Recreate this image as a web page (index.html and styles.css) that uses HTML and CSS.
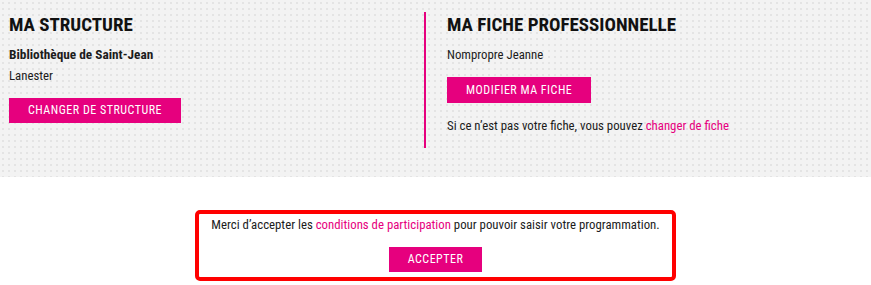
FILE: index.html
```html
<!DOCTYPE html>
<html lang="fr">
<head>
<meta charset="utf-8">
<title>Mon espace</title>
<link rel="stylesheet" href="styles.css">
</head>
<body>
<section class="top">
  <div class="col col-left">
    <h2 class="title">MA STRUCTURE</h2>
    <p class="line strong">Bibliothèque de Saint-Jean</p>
    <p class="line">Lanester</p>
    <a class="btn" href="#">CHANGER DE STRUCTURE</a>
  </div>
  <div class="col col-right">
    <h2 class="title">MA FICHE PROFESSIONNELLE</h2>
    <p class="line">Nompropre Jeanne</p>
    <a class="btn" href="#">MODIFIER MA FICHE</a>
    <p class="line">Si ce n’est pas votre fiche, vous pouvez <a class="link" href="#">changer de fiche</a></p>
  </div>
</section>
<section class="bottom">
  <div class="notice">
    <p class="line">Merci d’accepter les <a class="link" href="#">conditions de participation</a> pour pouvoir saisir votre programmation.</p>
    <a class="btn" href="#">ACCEPTER</a>
  </div>
</section>
</body>
</html>
```
FILE: styles.css
```css
html, body {
  margin: 0;
  padding: 0;
  background: #ffffff;
}
body {
  font-family: "Roboto Condensed", "Roboto", "Liberation Sans", sans-serif;
  font-size: 12.8px;
  color: #1c1c1c;
}
.top {
  display: grid;
  grid-template-columns: 415px 1fr;
  padding: 12px 9px 29px 9px;
  background-color: #f3f3f3;
  background-image: radial-gradient(circle at 3px 3px, #e4e4e4 0.9px, rgba(228,228,228,0) 1.4px);
  background-size: 6px 6px;
}
.col {
  padding-top: 2px;
}
.col-right {
  border-left: 2px solid #e6007e;
  padding-left: 21px;
  padding-bottom: 12px;
}
.title {
  margin: 0;
  font-size: 19px;
  line-height: 22px;
  font-weight: 700;
  color: #111111;
}
.line {
  margin: 0;
  line-height: 21px;
}
.title + .line {
  margin-top: 8px;
}
.strong {
  font-weight: 700;
  font-size: 13.3px;
}
.btn {
  display: inline-block;
  margin: 12px 0;
  height: 26px;
  line-height: 26px;
  padding: 0 19px;
  background: #e6007e;
  color: #ffffff;
  text-decoration: none;
  font-size: 12px;
  letter-spacing: 0.5px;
}
.col-left .btn {
  height: 25px;
  line-height: 25px;
}
.col-right .btn {
  margin-bottom: 12px;
}
.link {
  color: #e6007e;
  text-decoration: none;
}
.bottom {
  display: flex;
  justify-content: center;
  padding-top: 33px;
}
.notice {
  width: 473px;
  border: 4px solid #ff0000;
  border-radius: 5px;
  text-align: center;
  padding: 0 0 5px 0;
}
.notice .btn {
  margin: 12px 0 0 0;
  height: 25px;
  line-height: 25px;
  vertical-align: top;
}
```
